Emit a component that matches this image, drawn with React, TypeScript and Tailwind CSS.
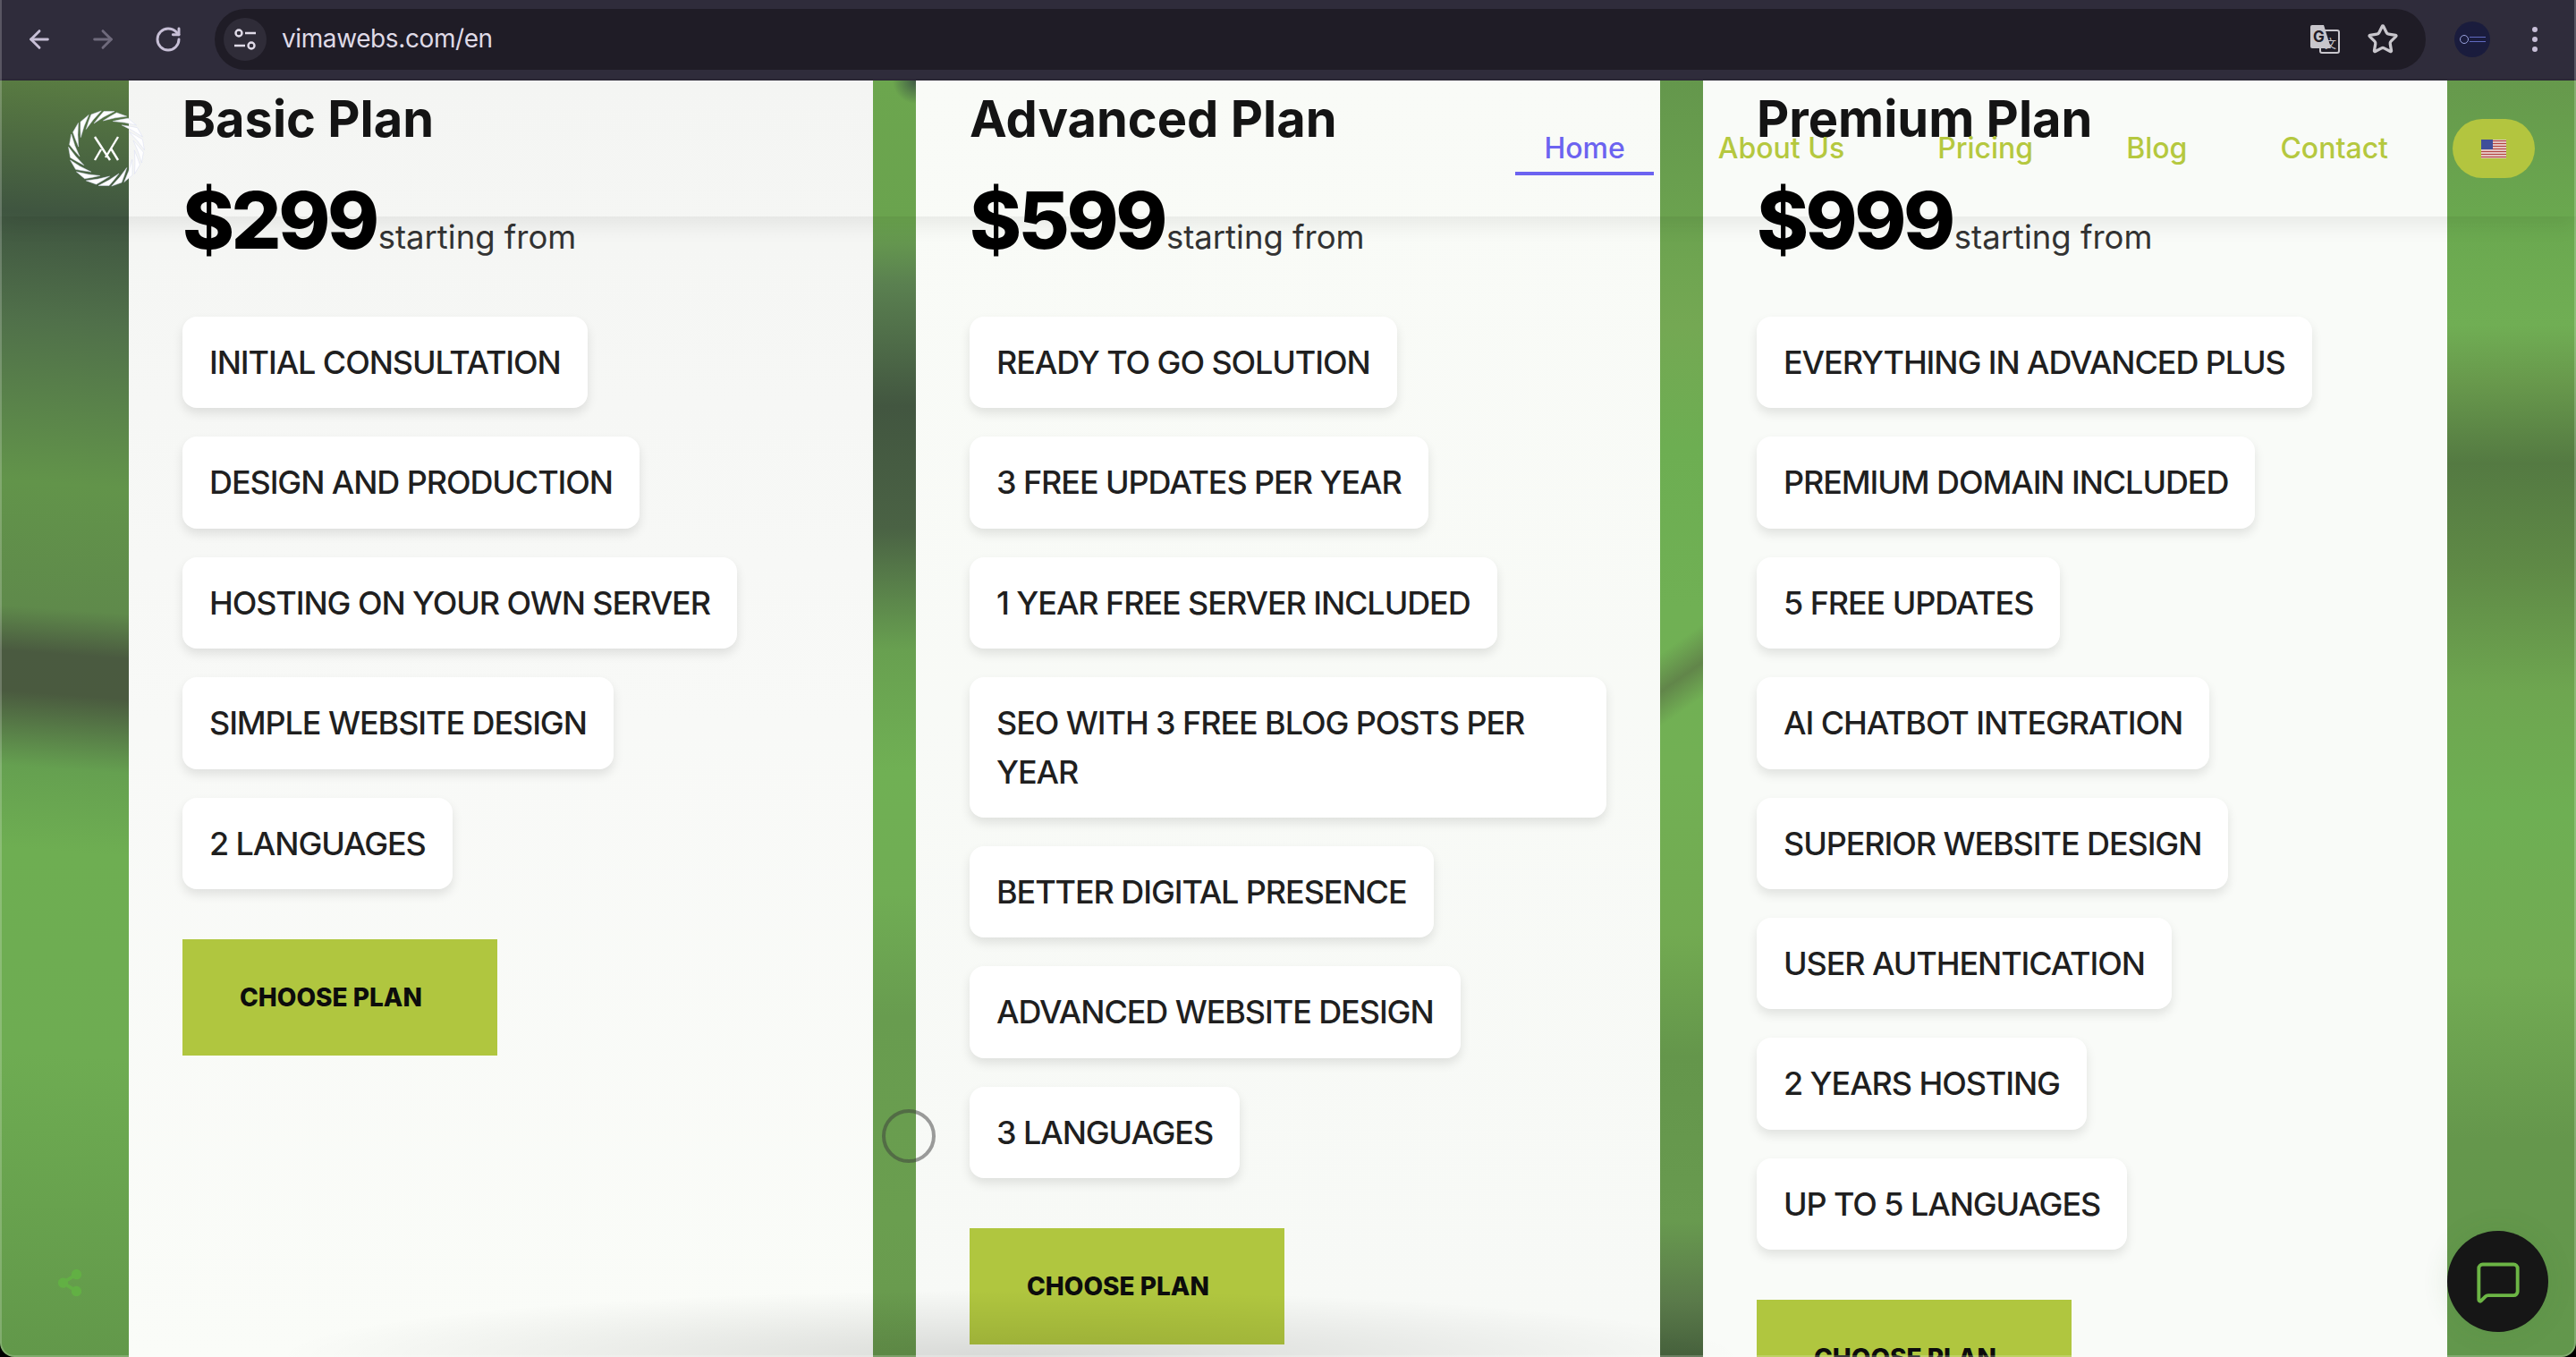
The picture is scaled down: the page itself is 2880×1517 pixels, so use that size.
import { ArrowLeft, ArrowRight, MessageSquare, RotateCw, Star } from "lucide-react";
import { FaShareAlt } from "react-icons/fa";

const plans = [
    {
        name: "Basic Plan",
        price: "$299",
        surface: "bg-gradient-to-b from-[#f4f5f3] via-[#f8f9f7] to-[#fafcf8]",
        features: [
            "INITIAL CONSULTATION",
            "DESIGN AND PRODUCTION",
            "HOSTING ON YOUR OWN SERVER",
            "SIMPLE WEBSITE DESIGN",
            "2 LANGUAGES",
        ],
    },
    {
        name: "Advanced Plan",
        price: "$599",
        surface: "bg-gradient-to-b from-[#f9fbf7] to-[#f7f9f6]",
        features: [
            "READY TO GO SOLUTION",
            "3 FREE UPDATES PER YEAR",
            "1 YEAR FREE SERVER INCLUDED",
            "SEO WITH 3 FREE BLOG POSTS PER YEAR",
            "BETTER DIGITAL PRESENCE",
            "ADVANCED WEBSITE DESIGN",
            "3 LANGUAGES",
        ],
    },
    {
        name: "Premium Plan",
        price: "$999",
        surface: "bg-[#f9fbf8]",
        features: [
            "EVERYTHING IN ADVANCED PLUS",
            "PREMIUM DOMAIN INCLUDED",
            "5 FREE UPDATES",
            "AI CHATBOT INTEGRATION",
            "SUPERIOR WEBSITE DESIGN",
            "USER AUTHENTICATION",
            "2 YEARS HOSTING",
            "UP TO 5 LANGUAGES",
        ],
    },
];

const navLinks = ["About Us", "Pricing", "Blog", "Contact"];

function Logo() {
    const blades = Array.from({ length: 18 }, (_, i) => i * 20);
    return (
        <svg className="w-[88px] h-[88px]" viewBox="-44 -44 88 88">
            {blades.map((angle) => (
                <path
                    key={angle}
                    d="M-14 -28 Q-8 -36 -3 -41.5 L9 -41.5 Q-3 -36 -14 -28 Z"
                    fill="#ffffff"
                    stroke="#d9ddf2"
                    strokeWidth={0.5}
                    transform={`rotate(${angle})`}
                />
            ))}
            <path
                d="M-13 -13 L4 13 M13 -13 L-1 10 M-13 13 L-6 1 M13 13 L5 0"
                fill="none"
                stroke="#ffffff"
                strokeWidth={2.4}
            />
        </svg>
    );
}

function UsFlag() {
    return (
        <svg className="w-[28px] h-[21px]" viewBox="0 0 28 21">
            <rect width="28" height="21" fill="#f3eeee" />
            <path
                d="M0 1.5H28M0 4.5H28M0 7.5H28M0 10.5H28M0 13.5H28M0 16.5H28M0 19.5H28"
                stroke="#b4453f"
                strokeWidth={1.6}
            />
            <rect width="13" height="11" fill="#3f4f9a" />
        </svg>
    );
}

function TranslateIcon() {
    return (
        <svg className="w-[34px] h-[34px]" viewBox="0 0 34 34">
            <rect x="12" y="7" width="21" height="25" rx="2" fill="#1f1c26" stroke="#c8c6cc" strokeWidth={2} />
            <path d="M3 1H16L24 27H3Q1 27 1 25V3Q1 1 3 1Z" fill="#c8c6cc" />
            <text x="4" y="20" fontSize="17" fontWeight="700" fill="#1f1c26" fontFamily="Inter, sans-serif">
                G
            </text>
            <text x="17" y="26" fontSize="13" fill="#c8c6cc" fontFamily="'Noto Sans CJK SC', sans-serif">
                文
            </text>
        </svg>
    );
}

function BrowserBar() {
    return (
        <header className="h-[90px] shrink-0 bg-[#2f2c3b] flex items-center border-b-2 border-[#2a2735]">
            <div className="flex items-center w-[240px] pl-[28px]">
                <ArrowLeft className="w-8 h-8 text-[#c7bfd6]" strokeWidth={2.2} />
                <ArrowRight className="w-8 h-8 ml-[39px] text-[#6f6a7c]" strokeWidth={2.2} />
                <RotateCw className="w-8 h-8 ml-[41px] text-[#c7bfd6]" strokeWidth={2.2} />
            </div>
            <div className="w-[2472px] h-[68px] rounded-full bg-[#1f1c26] flex items-center pl-[10px] pr-[30px]">
                <div className="w-12 h-12 rounded-full bg-[#2f2c38] flex items-center justify-center">
                    <svg className="w-[26px] h-[26px]" viewBox="0 0 26 26" fill="none" stroke="#e0dbe8" strokeWidth={2.4}>
                        <circle cx="6" cy="6" r="3.5" />
                        <path d="M13 6H25M1 20H13" />
                        <circle cx="20" cy="20" r="3.5" />
                    </svg>
                </div>
                <span className="ml-[17px] mb-[2px] text-[28px] tracking-[-0.4px] text-[#dfdae6]">vimawebs.com/en</span>
                <div className="ml-auto flex items-center gap-[30px]">
                    <TranslateIcon />
                    <Star className="w-9 h-9 text-[#c8c6cc]" strokeWidth={2.2} />
                </div>
            </div>
            <div className="w-10 h-10 ml-[32px] rounded-full bg-[#1a1c3d] flex items-center justify-center gap-[1px]">
                <span className="w-[10px] h-[10px] rounded-full border border-[#9aa3df]" />
                <span className="w-[18px] h-[6px] border-y border-[#5f6ac0]" />
            </div>
            <div className="ml-[47px] flex flex-col gap-[5px]">
                <span className="w-[6px] h-[6px] rounded-full bg-[#c8bfd8]" />
                <span className="w-[6px] h-[6px] rounded-full bg-[#c8bfd8]" />
                <span className="w-[6px] h-[6px] rounded-full bg-[#c8bfd8]" />
            </div>
        </header>
    );
}

function SiteNav() {
    return (
        <nav className="absolute top-0 left-0 right-0 h-[152px] z-10 flex items-center pl-[75px] pr-[46px] shadow-[0_10px_22px_rgba(0,0,0,0.07)] text-[32px] font-medium">
            <Logo />
            <div className="ml-auto flex items-center gap-[40px]">
                <a className="h-[60px] px-8 pt-[4px] flex items-center border-b-4 border-[#6c63f0] text-[#6c63f0]">Home</a>
                {navLinks.map((link) => (
                    <a key={link} className="h-[60px] px-8 pt-[4px] flex items-center border-b-4 border-transparent text-[#b5c83f]">
                        {link}
                    </a>
                ))}
                <button className="w-[92px] h-[66px] rounded-full bg-[#b3c53f] flex items-center justify-center">
                    <UsFlag />
                </button>
            </div>
        </nav>
    );
}

function PlanCard({ plan }: { plan: (typeof plans)[number] }) {
    return (
        <section className={`w-[832px] shrink-0 px-[60px] pt-[9px] ${plan.surface}`}>
            <h2 className="text-[56px] leading-[68px] font-bold text-[#141414]">{plan.name}</h2>
            <div className="mt-[26px] flex items-baseline">
                <span className="text-[88px] leading-[106px] font-extrabold tracking-[-3.5px] text-black">{plan.price}</span>
                <span className="ml-[2px] text-[36.5px] text-[#333333]">starting from</span>
            </div>
            <ul className="mt-[55px] flex flex-col gap-[32px]">
                {plan.features.map((feature) => (
                    <li
                        key={feature}
                        className="w-fit px-[30px] py-6 rounded-[16px] bg-white text-[36px] leading-[54.4px] font-medium tracking-[-1.1px] text-[#1f1f1f] shadow-[0_6px_12px_rgba(0,0,0,0.1)]"
                    >
                        {feature}
                    </li>
                ))}
            </ul>
            <button className="mt-[56px] w-[352px] h-[130px] pl-16 text-left bg-[#b0c63f] text-[28px] font-extrabold text-[#0c0c0c]">
                CHOOSE PLAN
            </button>
        </section>
    );
}

export default function App() {
    return (
        <div className="w-[2880px] h-[1517px] bg-black overflow-hidden font-['Inter',sans-serif]">
            <div className="relative w-full h-full flex flex-col overflow-hidden rounded-b-[16px]">
                <BrowserBar />
                <main className="relative flex-1 flex overflow-hidden">
                    <div className="w-[144px] shrink-0 bg-[linear-gradient(184deg,#5a7d42_0,#3f5540_155px,#50704a_273px,#62944a_455px,#5f8a4b_595px,#4a5a40_645px,#4a5a3f_690px,#65a050_773px,#6eae52_865px,#6eac52_1092px,#62984a_1427px)]" />
                    <PlanCard plan={plans[0]} />
                    <div className="w-[48px] shrink-0 bg-[radial-gradient(circle_at_100%_0,#3f5a45_0,transparent_26px),linear-gradient(180deg,#6ca64e_0,#6aa34e_155px,#5a8050_228px,#425640_364px,#4a6244_500px,#68a050_637px,#70b054_773px,#70ad54_910px,#689c4f_1046px,#6a9e4f_1274px,#68984d_1427px)]" />
                    <PlanCard plan={plans[1]} />
                    <div className="w-[48px] shrink-0 bg-[linear-gradient(145deg,transparent_525px,#5f7f48dd_560px,transparent_592px),linear-gradient(180deg,#64974c_0,#6ba24f_155px,#74a853_273px,#6dae52_410px,#70b054_591px,#72b054_773px,#72aa51_955px,#64964b_1092px,#689a4f_1274px,#5a7a4a_1365px,#46613c_1427px)]" />
                    <PlanCard plan={plans[2]} />
                    <div className="flex-1 bg-[linear-gradient(180deg,#66994c_0,#6aa84f_155px,#70ae54_273px,#68994c_337px,#547a42_428px,#5f8a46_546px,#6ea650_683px,#6eaf53_819px,#72ab53_1001px,#65974c_1183px,#62974c_1427px)]" />

                    <SiteNav />

                    {/* shade rising from the bottom edge */}
                    <div className="absolute inset-0 pointer-events-none bg-[radial-gradient(ellipse_820px_75px_at_1130px_100%,rgba(0,0,0,0.13),transparent)]" />

                    {/* cursor ring */}
                    <div className="absolute left-[986px] top-[1150px] w-[60px] h-[60px] rounded-full border-[4px] border-[#3c3c3c]/50" />

                    <FaShareAlt className="absolute left-[63px] top-[1329px] w-[30px] h-[30px] text-[#62b044]" />

                    <button className="absolute left-[2736px] top-[1286px] w-[113px] h-[113px] rounded-full bg-[#161616] flex items-center justify-center shadow-[0_0_30px_rgba(60,120,40,0.12)]">
                        <MessageSquare className="w-[52px] h-[52px] text-[#6cb545]" strokeWidth={1.8} />
                    </button>
                </main>
                {/* window edges */}
                <div className="absolute inset-0 pointer-events-none rounded-b-[16px] border-x-2 border-b-2 border-white/20" />
            </div>
        </div>
    );
}
